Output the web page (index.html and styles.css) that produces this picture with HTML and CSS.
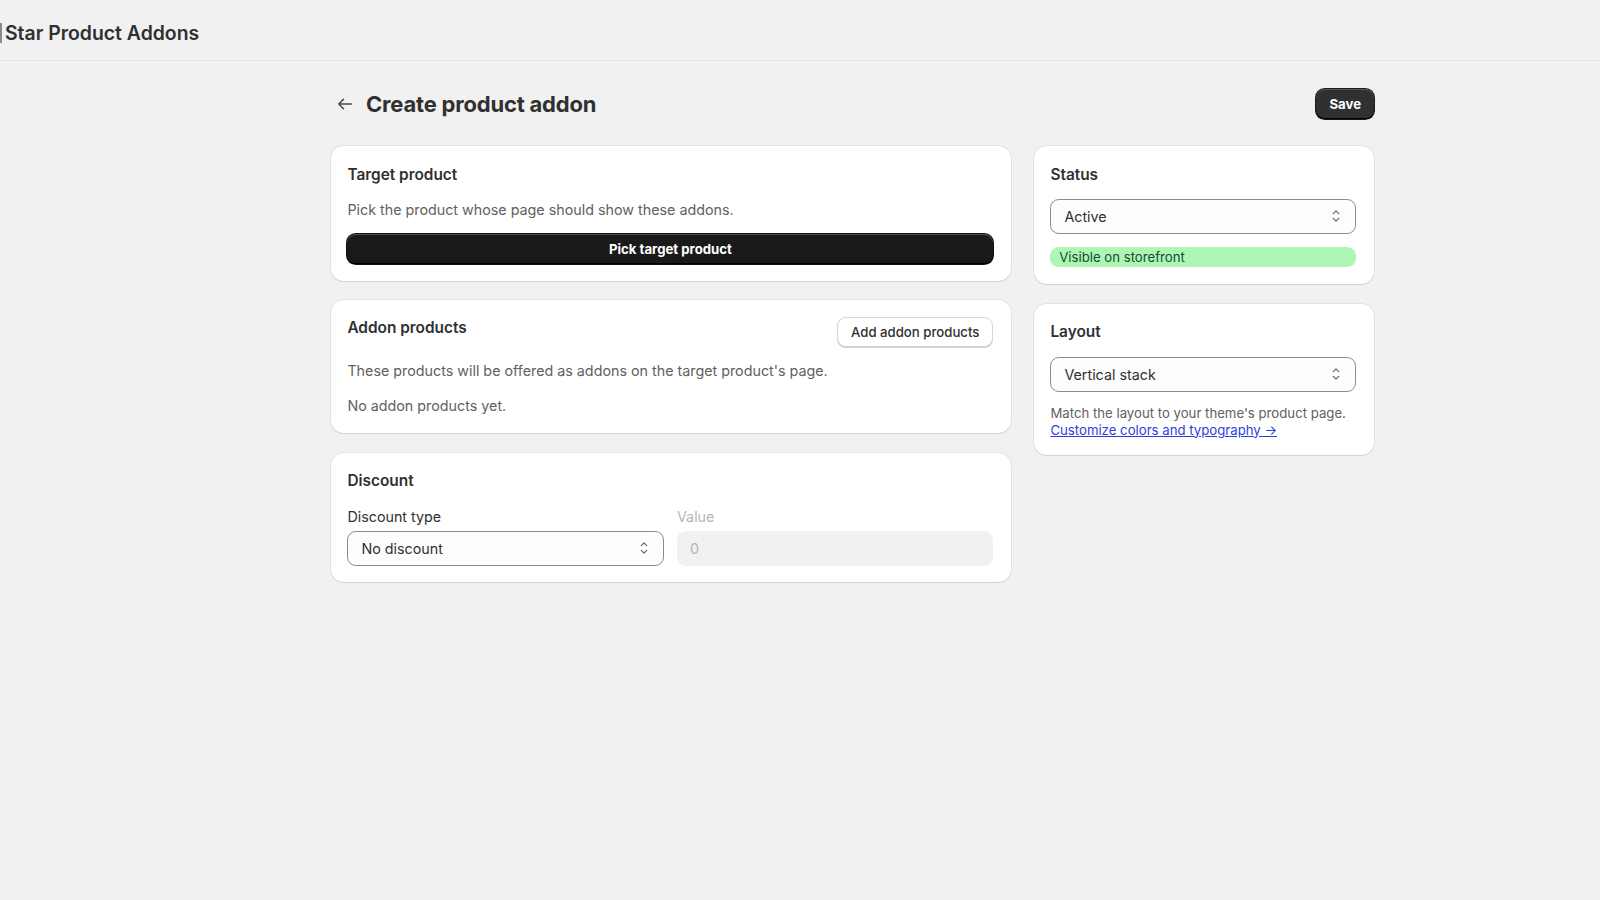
FILE: index.html
```html
<!DOCTYPE html>
<html lang="en">
<head>
<meta charset="utf-8">
<title>Star Product Addons</title>
<link rel="stylesheet" href="styles.css">
</head>
<body>
<header class="topbar">
  <span class="topbar-edge"></span>
  <span class="app-name">Star Product Addons</span>
</header>
<main class="page">
  <div class="page-header">
    <div class="page-title-wrap">
      <button class="back-btn" aria-label="Back">
        <svg width="16" height="16" viewBox="0 0 16 16" fill="none"><path d="M14.5 8H1.8M6.5 3.3L1.8 8L6.5 12.7" stroke="#4a4a4a" stroke-width="1.6" stroke-linecap="round" stroke-linejoin="round"/></svg>
      </button>
      <h1 class="page-title">Create product addon</h1>
    </div>
    <button class="btn-save">Save</button>
  </div>
  <div class="layout">
    <div class="col-main">
      <section class="card">
        <h2 class="card-title">Target product</h2>
        <p class="text-sub">Pick the product whose page should show these addons.</p>
        <button class="btn-primary">Pick target product</button>
      </section>
      <section class="card">
        <div class="card-head">
          <h2 class="card-title">Addon products</h2>
          <button class="btn-secondary">Add addon products</button>
        </div>
        <div class="text-stack">
          <p class="text-sub">These products will be offered as addons on the target product's page.</p>
          <p class="text-sub">No addon products yet.</p>
        </div>
      </section>
      <section class="card">
        <h2 class="card-title">Discount</h2>
        <div class="field-row">
          <div class="field">
            <label class="field-label">Discount type</label>
            <div class="select"><span>No discount</span>
              <svg class="chev" width="12" height="16" viewBox="0 0 12 16" fill="none"><path d="M3.3 5.6L6 2.9L8.7 5.6M3.3 10.4L6 13.1L8.7 10.4" stroke="#6b6b6b" stroke-width="1.3" stroke-linecap="round" stroke-linejoin="round"/></svg>
            </div>
          </div>
          <div class="field">
            <label class="field-label disabled">Value</label>
            <div class="input-disabled">0</div>
          </div>
        </div>
      </section>
    </div>
    <div class="col-side">
      <section class="card">
        <h2 class="card-title">Status</h2>
        <div class="select"><span>Active</span>
          <svg class="chev" width="12" height="16" viewBox="0 0 12 16" fill="none"><path d="M3.3 5.6L6 2.9L8.7 5.6M3.3 10.4L6 13.1L8.7 10.4" stroke="#6b6b6b" stroke-width="1.3" stroke-linecap="round" stroke-linejoin="round"/></svg>
        </div>
        <div class="badge-success">Visible on storefront</div>
      </section>
      <section class="card">
        <h2 class="card-title">Layout</h2>
        <div class="select"><span>Vertical stack</span>
          <svg class="chev" width="12" height="16" viewBox="0 0 12 16" fill="none"><path d="M3.3 5.6L6 2.9L8.7 5.6M3.3 10.4L6 13.1L8.7 10.4" stroke="#6b6b6b" stroke-width="1.3" stroke-linecap="round" stroke-linejoin="round"/></svg>
        </div>
        <div class="help">
          <div>Match the layout to your theme's product page.</div>
          <a class="link" href="#">Customize colors and typography →</a>
        </div>
      </section>
    </div>
  </div>
</main>
</body>
</html>
```

FILE: styles.css
```css
* { box-sizing: border-box; }
html, body { margin: 0; padding: 0; }
body {
  background: #f1f1f1;
  font-family: Inter, "Noto Sans", "Liberation Sans", sans-serif;
  color: #303030;
  min-height: 900px;
}
.topbar {
  height: 61px;
  display: flex;
  align-items: center;
  gap: 3px;
  border-bottom: 1px solid #e6e6e6;
  padding-top: 6px;
}
.topbar-edge {
  width: 2px;
  height: 20px;
  background: #8a8a8a;
}
.app-name {
  font-size: 19.4px;
  font-weight: 600;
  color: #303030;
}
.page {
  width: 1043px;
  margin-left: 331px;
}
.page-header {
  display: flex;
  align-items: center;
  justify-content: space-between;
  margin-top: 28px;
  height: 30px;
  margin-bottom: 27px;
}
.page-title-wrap {
  display: flex;
  align-items: center;
  gap: 13px;
  padding-left: 6px;
}
.back-btn {
  border: 0;
  background: none;
  padding: 0;
  width: 16px;
  height: 16px;
  display: flex;
  align-items: center;
  justify-content: center;
  cursor: pointer;
}
.page-title {
  margin: 0;
  font-size: 22px;
  line-height: 26px;
  font-weight: 700;
  color: #303030;
  letter-spacing: -0.2px;
}
.btn-save {
  font-family: inherit;
  background: #303030;
  color: #fff;
  border: 0;
  border-radius: 8.8px;
  height: 30px;
  padding: 0 13px;
  font-size: 13.2px;
  font-weight: 700;
  box-shadow: inset 0 -1px 0 #000, inset 0 1px 0 rgba(255,255,255,.2), 0 0 0 1px #1a1a1a;
}
.layout {
  display: grid;
  grid-template-columns: 680px 340px;
  gap: 23px;
  align-items: start;
}
.col-main, .col-side {
  display: flex;
  flex-direction: column;
  gap: 19.7px;
}
.card {
  background: #fff;
  border-radius: 13px;
  padding: 17.6px 17.6px 16.6px 16.4px;
  box-shadow: 0 0 0 1px rgba(0,0,0,0.055), 0 1px 1px rgba(0,0,0,0.08);
  display: flex;
  flex-direction: column;
  gap: 13.2px;
}
.card-title {
  margin: 0;
  font-size: 15.4px;
  font-weight: 600;
  line-height: 22px;
  color: #303030;
}
.card-head {
  display: flex;
  justify-content: space-between;
  align-items: flex-start;
  margin-top: -0.6px;
}
.text-stack {
  display: flex;
  flex-direction: column;
  gap: 12.2px;
  margin-top: 0.4px;
}
.text-sub {
  margin: 0;
  font-size: 14.3px;
  line-height: 22px;
  color: #616161;
}
.btn-primary {
  font-family: inherit;
  height: 30px;
  border: 0;
  border-radius: 8.8px;
  background: #1a1a1a;
  color: #fff;
  font-size: 13.2px;
  font-weight: 700;
  box-shadow: inset 0 -1px 0 #000, inset 0 1px 0 rgba(255,255,255,.25), 0 0 0 1px #111;
}
.btn-secondary {
  font-family: inherit;
  height: 29.6px;
  padding: 0 13px;
  border: 1px solid #d6d6d6;
  border-radius: 8.8px;
  background: #fff;
  color: #303030;
  font-size: 13.2px;
  font-weight: 500;
  box-shadow: 0 1px 0 #cfcfcf;
}
.field-row {
  display: grid;
  grid-template-columns: 1fr 1fr;
  gap: 13.2px;
}
.field {
  display: flex;
  flex-direction: column;
  gap: 3px;
}
.field-label {
  font-size: 14.3px;
  line-height: 22px;
  color: #303030;
}
.field-label.disabled { color: #b5b5b5; }
.select {
  height: 35px;
  border: 1px solid #8a8a8a;
  border-radius: 8.8px;
  background: #fdfdfd;
  display: flex;
  align-items: center;
  justify-content: space-between;
  padding: 0 13px 0 13px;
  font-size: 14.3px;
  color: #303030;
}
.chev { flex: none; }
.input-disabled {
  height: 35px;
  border-radius: 8.8px;
  background: #f1f1f1;
  display: flex;
  align-items: center;
  padding: 0 13px;
  font-size: 14.3px;
  color: #b5b5b5;
}
.badge-success {
  height: 20.5px;
  border-radius: 8.8px;
  background: #aff5b4;
  color: #0c5132;
  font-size: 13.2px;
  line-height: 20.5px;
  padding: 0 8.8px;
}
.help {
  font-size: 13.2px;
  line-height: 17px;
  color: #616161;
}
.link {
  color: #2a3fe0;
  text-decoration: underline;
}
```
